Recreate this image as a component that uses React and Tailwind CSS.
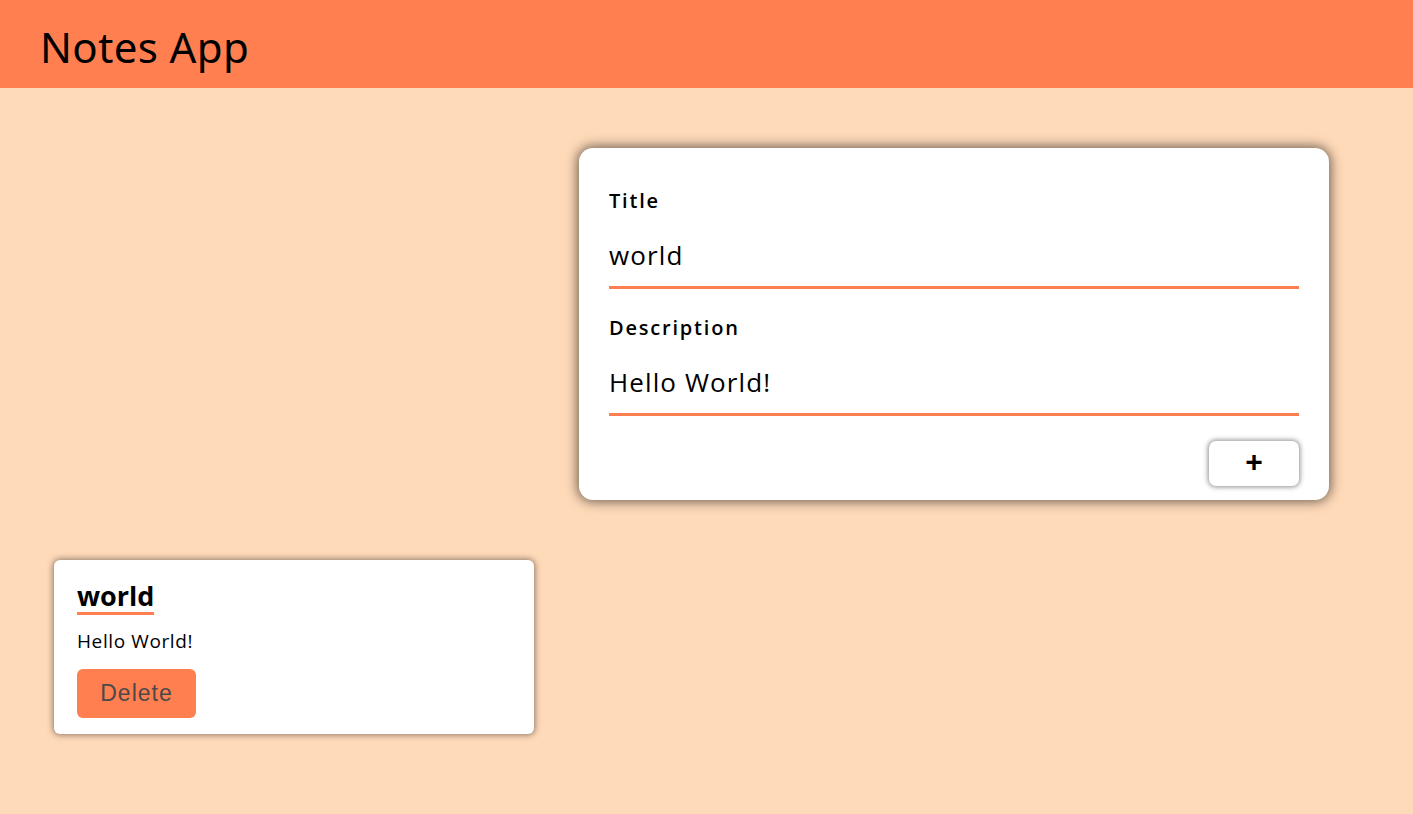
export default function App() {
  return (
    <div className="min-h-screen w-full bg-[#ffdab9]" style={{ fontFamily: '"Open Sans", "Noto Sans", sans-serif' }}>
      {/* header */}
      <header className="h-[88px] bg-[#ff7f50] flex items-center px-10 pt-[4px]">
        <h1 className="text-[42px] font-normal text-black tracking-[0.4px]" style={{ fontFamily: '"Noto Sans", sans-serif' }}>Notes App</h1>
      </header>

      {/* form */}
      <div className="flex justify-end pr-[84px] pt-[60px]">
        <form className="w-[750px] h-[352px] bg-white rounded-[14px] px-[30px] pt-[40px] shadow-[0_0_12px_2px_rgba(0,0,0,0.55)]">
          <label className="block text-[20px] font-semibold tracking-[1.8px] text-black leading-[26px]">Title</label>
          <input
            defaultValue="world"
            className="block w-full mt-[10px] h-[65px] text-[26px] tracking-[1.1px] text-black outline-none border-b-[3px] border-[#ff7f50]"
          />
          <label className="block mt-[26px] text-[20px] font-semibold tracking-[1.8px] text-black leading-[26px]">Description</label>
          <input
            defaultValue="Hello World!"
            className="block w-full mt-[10px] h-[65px] text-[26px] tracking-[1.1px] text-black outline-none border-b-[3px] border-[#ff7f50]"
          />
          <div className="flex justify-end mt-[25px]">
            <button type="button" className="w-[90px] h-[45px] bg-white rounded-[7px] shadow-[0_0_5px_1px_rgba(0,0,0,0.45)] text-[30px] leading-none font-semibold text-black flex items-center justify-center pb-[3px]" style={{ fontFamily: '"Liberation Sans", sans-serif' }}>
              +
            </button>
          </div>
        </form>
      </div>

      {/* notes */}
      <div className="pl-[54px] pt-[60px]">
        <div className="w-[480px] h-[174px] bg-white rounded-[6px] shadow-[0_0_6px_1px_rgba(0,0,0,0.45)] px-[23px] pt-[20px]">
          <h2 className="inline-block text-[27px] font-bold leading-[32px] text-black border-b-[3px] border-[#ff7f50]">world</h2>
          <p className="mt-[14px] text-[19px] leading-[24px] text-black tracking-[0.6px]">Hello World!</p>
          <button type="button" className="mt-[16px] w-[119px] h-[49px] bg-[#ff7f50] rounded-[6px] text-[23px] text-[#4a4a4a] tracking-[1px]" style={{ fontFamily: '"Liberation Sans", sans-serif' }}>
            Delete
          </button>
        </div>
      </div>
    </div>
  )
}
